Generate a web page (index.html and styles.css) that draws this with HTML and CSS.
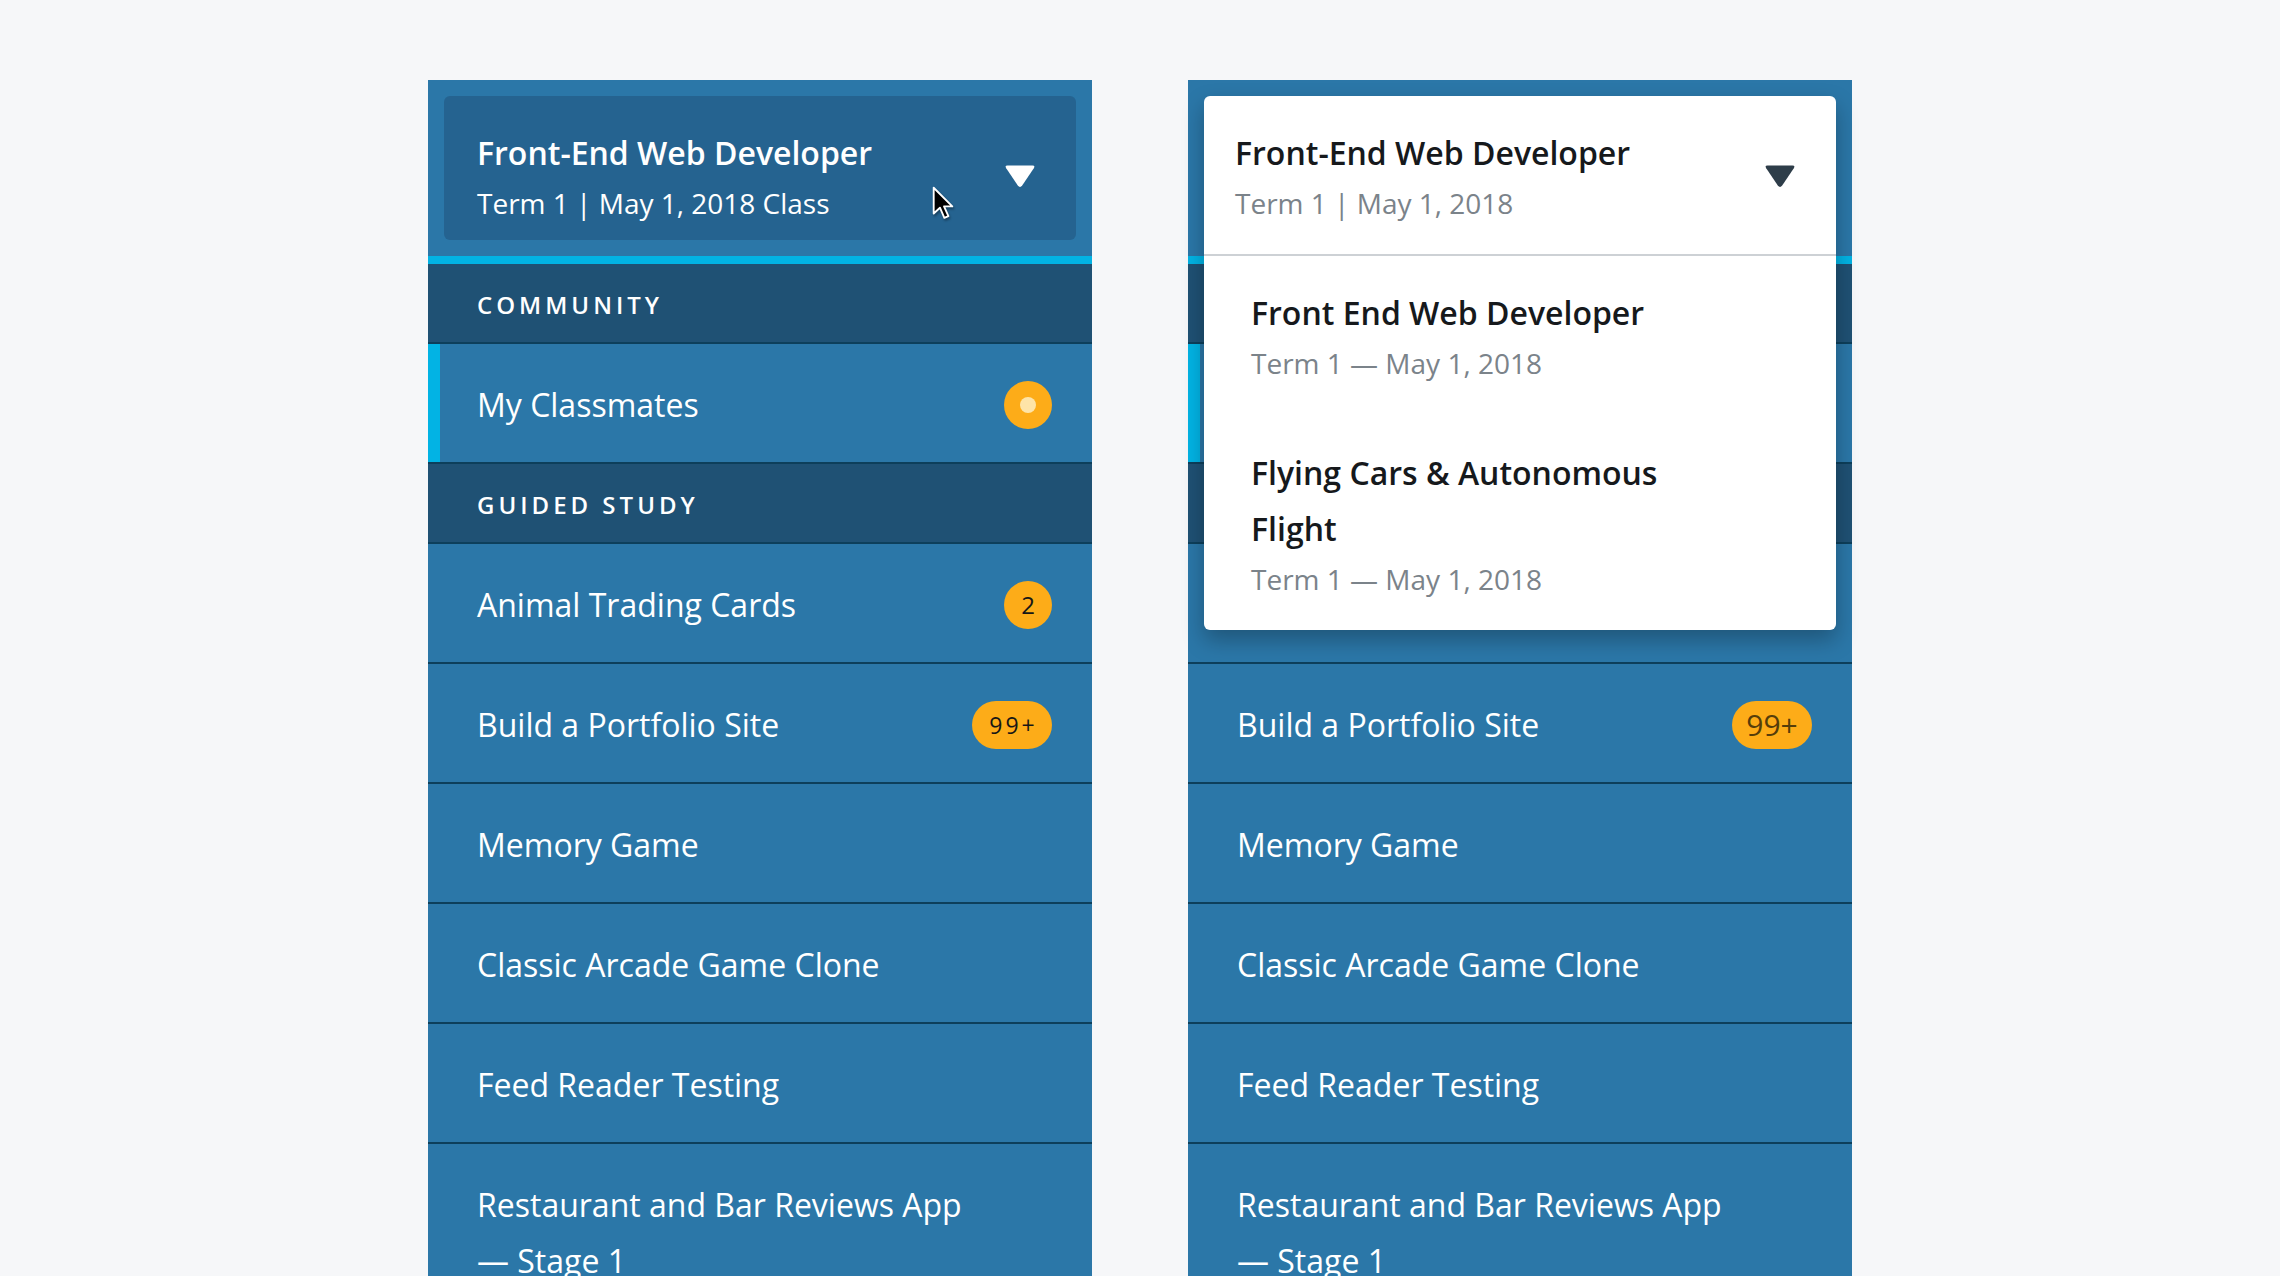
FILE: index.html
```html
<!DOCTYPE html>
<html lang="en">
<head>
<meta charset="utf-8">
<title>Classroom sidebar</title>
<link rel="stylesheet" href="styles.css">
</head>
<body>
<div class="page">
  <!-- Closed state -->
  <nav class="panel">
    <div class="panel-head">
      <div class="course-card">
        <div class="course-text">
          <div class="course-title">Front-End Web Developer</div>
          <div class="course-sub">Term 1 | May 1, 2018 Class</div>
        </div>
        <svg class="caret" viewBox="0 0 32 24"><path d="M3.5 1.5 H28.5 Q31.5 1.5 29.8 4.2 L18.2 21.6 Q16 24.2 13.8 21.6 L2.2 4.2 Q0.5 1.5 3.5 1.5 Z" fill="#ffffff"/></svg>
      </div>
    </div>
    <div class="accent"></div>
    <div class="section">COMMUNITY</div>
    <div class="item item--active"><span class="label">My Classmates</span><span class="badge badge--dot"><span class="dot"></span></span></div>
    <div class="section">GUIDED STUDY</div>
    <div class="item"><span class="label">Animal Trading Cards</span><span class="badge">2</span></div>
    <div class="item"><span class="label">Build a Portfolio Site</span><span class="badge badge--wide">99+</span></div>
    <div class="item"><span class="label">Memory Game</span></div>
    <div class="item"><span class="label">Classic Arcade Game Clone</span></div>
    <div class="item"><span class="label">Feed Reader Testing</span></div>
    <div class="item"><span class="label">Restaurant and Bar Reviews App —&nbsp;Stage 1</span></div>
    <svg class="cursor" viewBox="0 0 13 20"><path d="M1 1 L1 16.2 L4.7 12.8 L7.3 18.8 L9.7 17.8 L7.1 12 L12 12 Z" fill="#000" stroke="#fff" stroke-width="1.1" stroke-linejoin="round"/></svg>
  </nav>

  <!-- Open state -->
  <nav class="panel">
    <div class="panel-head panel-head--open">
      <div class="dropdown">
        <div class="dd-head">
          <div class="course-text">
            <div class="course-title">Front-End Web Developer</div>
            <div class="course-sub dd-muted">Term 1 | May 1, 2018</div>
          </div>
          <svg class="caret" viewBox="0 0 32 24"><path d="M3.5 1.5 H28.5 Q31.5 1.5 29.8 4.2 L18.2 21.6 Q16 24.2 13.8 21.6 L2.2 4.2 Q0.5 1.5 3.5 1.5 Z" fill="#2e3d49"/></svg>
        </div>
        <div class="dd-list">
          <div class="dd-item">
            <div class="dd-title">Front End Web Developer</div>
            <div class="dd-sub">Term 1 — May 1, 2018</div>
          </div>
          <div class="dd-item">
            <div class="dd-title">Flying Cars &amp; Autonomous Flight</div>
            <div class="dd-sub">Term 1 — May 1, 2018</div>
          </div>
        </div>
      </div>
    </div>
    <div class="accent"></div>
    <div class="section"><span class="covered">COMMUNITY</span></div>
    <div class="item item--active"><span class="label covered">My Classmates</span><span class="badge badge--dot covered"><span class="dot"></span></span></div>
    <div class="section"><span class="covered">GUIDED STUDY</span></div>
    <div class="item"><span class="label covered">Animal Trading Cards</span><span class="badge covered">2</span></div>
    <div class="item"><span class="label">Build a Portfolio Site</span><span class="badge badge--pill">99+</span></div>
    <div class="item"><span class="label">Memory Game</span></div>
    <div class="item"><span class="label">Classic Arcade Game Clone</span></div>
    <div class="item"><span class="label">Feed Reader Testing</span></div>
    <div class="item"><span class="label">Restaurant and Bar Reviews App —&nbsp;Stage 1</span></div>
  </nav>
</div>
</body>
</html>
```

FILE: styles.css
```css
html, body {
  margin: 0;
  padding: 0;
  background: #f6f7f9;
}

body {
  font-family: "Open Sans", "Noto Sans", sans-serif;
  overflow: hidden;
  height: 1276px;
}

.page {
  display: flex;
  justify-content: center;
  align-items: flex-start;
  gap: 96px;
  padding-top: 80px;
}

.panel {
  position: relative;
  width: 664px;
  background: #2b77a8;
  color: #ffffff;
}

.panel-head {
  padding: 16px;
}

.panel-head--open {
  position: relative;
  height: 176px;
  box-sizing: border-box;
}

.course-card {
  box-sizing: border-box;
  height: 144px;
  background: #256390;
  border-radius: 6px;
  padding: 35px 40px 0 33px;
  display: flex;
  justify-content: space-between;
  align-items: flex-start;
}

.course-title {
  font-size: 32px;
  font-weight: 600;
  line-height: 44px;
  white-space: nowrap;
}

.course-sub {
  font-size: 28px;
  line-height: 44px;
  margin-top: 6px;
  white-space: nowrap;
}

.caret {
  width: 32px;
  height: 24px;
  margin-top: 33px;
  flex-shrink: 0;
}

.accent {
  height: 8px;
  background: #02b3e4;
}

.section {
  box-sizing: border-box;
  height: 80px;
  display: flex;
  align-items: center;
  padding-left: 49px;
  padding-top: 2px;
  background: #1f5174;
  border-bottom: 2px solid #0d3f5b;
  font-size: 24px;
  font-weight: 600;
  letter-spacing: 4px;
}

.item {
  display: flex;
  align-items: center;
  justify-content: space-between;
  gap: 24px;
  padding: 33px 40px 29px 49px;
  font-size: 32px;
  line-height: 56px;
  border-bottom: 2px solid #0d3f5b;
}

.item--active {
  box-shadow: inset 12px 0 0 #02b3e4;
}

.label {
  flex: 1 1 auto;
}

.covered {
  visibility: hidden;
}

.badge {
  flex-shrink: 0;
  box-sizing: border-box;
  width: 48px;
  height: 48px;
  border-radius: 24px;
  background: #fdac18;
  color: #161616;
  display: flex;
  align-items: center;
  justify-content: center;
  font-size: 24px;
  line-height: 1;
  font-weight: 500;
}

.badge--dot .dot {
  width: 16px;
  height: 16px;
  border-radius: 50%;
  background: #fee4a8;
}

.badge--wide {
  width: 80px;
  font-size: 23px;
  letter-spacing: 3px;
  padding-left: 3px;
}

.badge--pill {
  width: 80px;
  font-size: 30px;
  color: #553d0a;
  font-weight: 400;
}

.cursor {
  position: absolute;
  left: 504px;
  top: 106px;
  width: 22px;
  height: 34px;
  filter: drop-shadow(1px 2px 1px rgba(0, 0, 0, 0.35));
}

/* open dropdown */
.dropdown {
  position: absolute;
  top: 16px;
  left: 16px;
  right: 16px;
  z-index: 2;
  background: #ffffff;
  border-radius: 6px;
  color: #1c2024;
  box-shadow: 0 10px 22px rgba(0, 0, 0, 0.28);
}

.dd-head {
  display: flex;
  justify-content: space-between;
  align-items: flex-start;
  padding: 35px 40px 29px 31px;
  border-bottom: 2px solid #cdd1d5;
}

.dd-head .course-title {
  color: #16191c;
}

.dd-muted {
  color: #7b838a;
}

.dd-item {
  padding: 31px 110px 29px 47px;
}

.dd-item:first-child {
  padding-top: 29px;
}

.dd-title {
  font-size: 32px;
  font-weight: 600;
  line-height: 56px;
  color: #16191c;
}

.dd-sub {
  font-size: 28px;
  line-height: 44px;
  color: #7b838a;
}
```
